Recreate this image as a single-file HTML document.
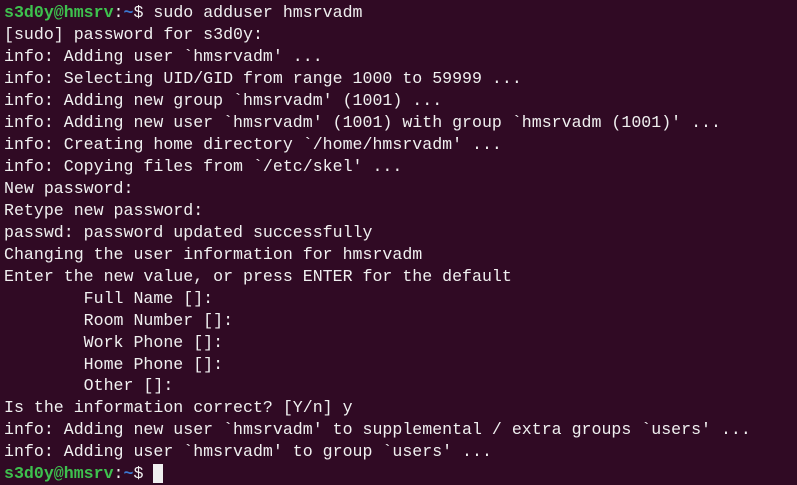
<!DOCTYPE html>
<html><head><meta charset="utf-8"><style>
html,body{margin:0;padding:0;background:#300a24;width:797px;height:467px;overflow:hidden}
pre{margin:0;position:absolute;left:4px;top:2px;font-family:"Liberation Mono","DejaVu Sans Mono",monospace;font-size:16.6px;line-height:21.97px;color:#f0f0f0;white-space:pre}
.g{color:#3ec14e;font-weight:bold}.b{color:#3b78d0;font-weight:bold}
.c{background:#f0f0f0;color:#f0f0f0}
</style></head><body><pre><span class="g">s3d0y@hmsrv</span>:<span class="b">~</span>$ sudo adduser hmsrvadm
[sudo] password for s3d0y:
info: Adding user `hmsrvadm' ...
info: Selecting UID/GID from range 1000 to 59999 ...
info: Adding new group `hmsrvadm' (1001) ...
info: Adding new user `hmsrvadm' (1001) with group `hmsrvadm (1001)' ...
info: Creating home directory `/home/hmsrvadm' ...
info: Copying files from `/etc/skel' ...
New password:
Retype new password:
passwd: password updated successfully
Changing the user information for hmsrvadm
Enter the new value, or press ENTER for the default
        Full Name []:
        Room Number []:
        Work Phone []:
        Home Phone []:
        Other []:
Is the information correct? [Y/n] y
info: Adding new user `hmsrvadm' to supplemental / extra groups `users' ...
info: Adding user `hmsrvadm' to group `users' ...
<span class="g">s3d0y@hmsrv</span>:<span class="b">~</span>$ <span class="c"> </span></pre></body></html>
